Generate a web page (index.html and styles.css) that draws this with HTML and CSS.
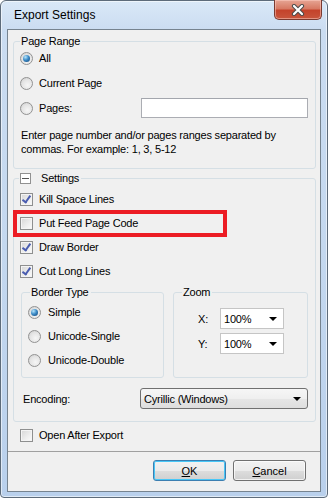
FILE: index.html
```html
<!DOCTYPE html>
<html lang="en">
  <head>
    <meta charset="UTF-8" />
    <title>Export Settings</title>
    <link rel="stylesheet" href="styles.css">
  </head>
  <body>
    <div class="window">
      <div class="titlebar">
        <span class="title">Export Settings</span>
        <div class="close-btn">
          <svg width="14" height="12" viewBox="0 0 14 12">
            <path d="M3 2 L11 10 M11 2 L3 10" stroke="#4b4b4b" stroke-width="4.2" stroke-linecap="round" fill="none" />
            <path d="M3 2 L11 10 M11 2 L3 10" stroke="#ffffff" stroke-width="2.2" stroke-linecap="round" fill="none" />
          </svg>
        </div>
      </div>

      <div class="client">
        <fieldset class="group range">
          <legend>Page Range</legend>
          <div class="row"><span class="radio checked"></span><span class="lbl">All</span></div>
          <div class="row"><span class="radio"></span><span class="lbl">Current Page</span></div>
          <div class="row">
            <span class="radio"></span><span class="lbl pages-lbl">Pages:</span>
            <div class="textbox"></div>
          </div>
          <p class="hint">Enter page number and/or pages ranges separated by commas. For example: 1, 3, 5-12</p>
        </fieldset>

        <fieldset class="group settings">
          <legend><span class="collapse"></span>Settings</legend>
          <div class="row"><span class="check on"></span><span class="lbl">Kill Space Lines</span></div>
          <div class="row"><span class="check"></span><span class="lbl">Put Feed Page Code</span></div>
          <div class="row"><span class="check on"></span><span class="lbl">Draw Border</span></div>
          <div class="row"><span class="check on"></span><span class="lbl">Cut Long Lines</span></div>

          <div class="subgroups">
            <fieldset class="group border-type">
              <legend>Border Type</legend>
              <div class="row"><span class="radio checked"></span><span class="lbl wide">Simple</span></div>
              <div class="row"><span class="radio"></span><span class="lbl wide">Unicode-Single</span></div>
              <div class="row"><span class="radio"></span><span class="lbl wide">Unicode-Double</span></div>
            </fieldset>
            <fieldset class="group zoom">
              <legend>Zoom</legend>
              <div class="zoom-row"><span class="axis">X:</span><div class="combo small">100%<span class="arrow"></span></div></div>
              <div class="zoom-row"><span class="axis">Y:</span><div class="combo small">100%<span class="arrow"></span></div></div>
            </fieldset>
          </div>

          <div class="encoding-row">
            <span class="enc-lbl">Encoding:</span>
            <div class="combo list">Cyrillic (Windows)<span class="arrow"></span></div>
          </div>
        </fieldset>

        <div class="row open-row"><span class="check"></span><span class="lbl">Open After Export</span></div>

        <div class="footer">
          <button class="btn default"><u>O</u>K</button>
          <button class="btn"><u>C</u>ancel</button>
        </div>
      </div>

      <div class="highlight"></div>
    </div>
  </body>
</html>
```

FILE: styles.css
```css
* {
  margin: 0;
  padding: 0;
  box-sizing: border-box;
}
body {
  width: 328px;
  height: 498px;
  font-family: "Liberation Sans", Arial, sans-serif;
  font-size: 11px;
  color: #000;
  background: #fff;
  overflow: hidden;
}
.window {
  position: relative;
  height: 498px;
  display: flex;
  flex-direction: column;
  padding: 0 6px 5px;
  border: 1px solid #5d6b7a;
  border-radius: 6px 6px 4px 4px;
  background: linear-gradient(to bottom, #d9e8f7 0%, #cadcf1 30px, #c4d8ef 50%, #b9d0ec 100%);
  box-shadow: inset 0 0 0 1px rgba(255, 255, 255, 0.55);
}
.titlebar {
  height: 28px;
  display: flex;
  align-items: flex-start;
}
.title {
  font-size: 12px;
  line-height: 16px;
  margin: 6px 0 0 7px;
}
.close-btn {
  margin: -1px -1px 0 auto;
  width: 48px;
  height: 20px;
  border: 1px solid #7a3a30;
  border-top: none;
  border-radius: 0 0 5px 5px;
  background: linear-gradient(to bottom, #e6a594 0%, #d77a64 45%, #c4432b 55%, #c8553c 100%);
  box-shadow: inset 0 0 0 1px rgba(255, 210, 200, 0.5);
  display: flex;
  align-items: center;
  justify-content: center;
}
.client {
  flex: 1;
  display: flex;
  flex-direction: column;
  background: #f0f0f0;
  border: 1px solid #76838f;
  letter-spacing: -0.2px;
}

/* group boxes */
.group {
  border: 1px solid #d5dfe5;
  border-radius: 3px;
  padding: 0 6px;
}
.group legend {
  line-height: 14px;
  padding: 0 2px 0 1px;
}
.range {
  margin: 4px 4px 0 5px;
  padding-bottom: 12px;
}
.row {
  display: flex;
  align-items: center;
  height: 20px;
}
.range .row + .row {
  margin-top: 5px;
}
.lbl {
  margin-left: 6px;
  white-space: nowrap;
}
.lbl.wide {
  margin-left: 7px;
}
.pages-lbl {
  width: 102px;
}
.textbox {
  width: 167px;
  height: 20px;
  background: #fff;
  border: 1px solid #abadb3;
  border-top-color: #a3a6ad;
}
.hint {
  margin-top: 10px;
  padding-left: 1px;
  line-height: 14px;
}

.settings {
  margin: 2px 4px 0 5px;
  padding-bottom: 12px;
}
.settings legend {
  display: flex;
  align-items: center;
  margin-left: -1px;
}
.collapse {
  position: relative;
  width: 11px;
  height: 11px;
  border: 1px solid #919191;
  background: #fff;
  margin-right: 10px;
}
.collapse::after {
  content: "";
  position: absolute;
  left: 1px;
  right: 1px;
  top: 4px;
  height: 1px;
  background: #555;
}
.settings > legend + .row {
  margin-top: 4px;
}
.settings > .row + .row {
  margin-top: 4px;
}

/* radio buttons and checkboxes */
.radio {
  flex: none;
  width: 13px;
  height: 13px;
  border-radius: 50%;
  border: 1px solid #929292;
  background: radial-gradient(circle at 60% 65%, #f6f6f6 0, #e4e4e4 55%, #c9c9c9 100%);
  display: flex;
  align-items: center;
  justify-content: center;
}
.radio.checked::after {
  content: "";
  width: 7px;
  height: 7px;
  border-radius: 50%;
  background: radial-gradient(circle at 35% 30%, #b7e6fb 0, #3d8cc8 45%, #0d3f72 100%);
}
.check {
  flex: none;
  width: 13px;
  height: 13px;
  border: 1px solid #8e8f8f;
  background: linear-gradient(135deg, #d6d6d6 0%, #eeeeee 60%, #fbfbfb 100%);
  box-shadow: inset 0 0 0 1px #f4f4f4;
  display: flex;
  align-items: center;
  justify-content: center;
}
.check.on::after {
  content: "";
  width: 3px;
  height: 7px;
  margin-top: -1px;
  border: solid #4a5db0;
  border-width: 0 2px 2px 0;
  transform: rotate(35deg);
}

/* border type / zoom */
.subgroups {
  display: flex;
  gap: 9px;
  margin: 4px 0 0 1px;
}
.border-type {
  width: 143px;
  padding-bottom: 7px;
}
.border-type legend {
  margin-left: 2px;
}
.border-type .row {
  margin-top: 4px;
}
.border-type legend + .row {
  margin-top: 3px;
}
.zoom {
  width: 135px;
  padding-top: 5px;
}
.zoom legend {
  margin-left: 2px;
}
.zoom-row {
  display: flex;
  align-items: center;
  padding-left: 18px;
  margin-top: 4px;
}
.axis {
  width: 22px;
}
.combo {
  position: relative;
  display: flex;
  align-items: center;
  height: 21px;
  padding-left: 3px;
  background: #fff;
  border: 1px solid #c5c5c5;
}
.combo.small {
  width: 64px;
}
.arrow {
  position: absolute;
  right: 6px;
  top: 8px;
  border-left: 4px solid transparent;
  border-right: 4px solid transparent;
  border-top: 4px solid #000;
}
.encoding-row {
  display: flex;
  align-items: center;
  margin-top: 10px;
  padding-left: 3px;
}
.enc-lbl {
  width: 117px;
}
.combo.list {
  width: 168px;
  border: 1px solid #707070;
  border-radius: 3px;
  background: linear-gradient(to bottom, #f6f6f6 0%, #efefef 50%, #e6e6e6 51%, #dedede 100%);
}

.open-row {
  margin: 3px 0 0 12px;
}

/* buttons */
.footer {
  flex: 1;
  margin-top: 6px;
  border-top: 1px solid #a0a0a0;
  display: flex;
  justify-content: flex-end;
  align-items: flex-start;
  gap: 7px;
  padding: 8px 14px 0 0;
}
.btn {
  width: 73px;
  height: 21px;
  font: inherit;
  color: #000;
  border: 1px solid #707070;
  border-radius: 3px;
  background: linear-gradient(to bottom, #f2f2f2 0%, #ebebeb 50%, #dddddd 51%, #cfcfcf 100%);
  box-shadow: inset 0 0 0 1px rgba(255, 255, 255, 0.7);
}
.btn.default {
  border-color: #3c7fb1;
  box-shadow: inset 0 0 0 1px #48c7f7;
}

/* red annotation box */
.highlight {
  position: absolute;
  left: 12px;
  top: 209px;
  width: 214px;
  height: 27px;
  border: 4px solid #ec1c24;
}
```
